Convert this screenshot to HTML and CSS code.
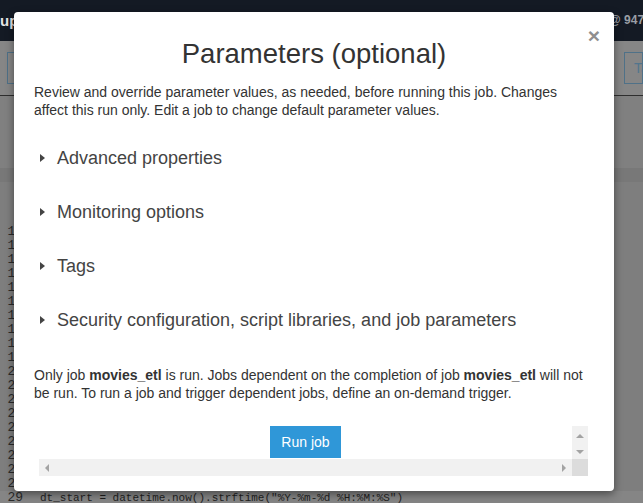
FILE: index.html
```html
<!DOCTYPE html>
<html lang="en">
<head>
<meta charset="utf-8">
<title>Parameters (optional)</title>
<link rel="stylesheet" href="styles.css">
</head>
<body>
<div class="page">
  <header class="topbar">
    <span class="crumb">up</span>
    <span class="account">@ 9471</span>
  </header>
  <div class="toolbar">
    <span class="tbtn tbtn-left">Save</span>
    <span class="tbtn tbtn-right">Ta</span>
  </div>
  <div class="pane"></div>
  <div class="band"></div>
  <div class="editor">
    <div class="row"><span class="ln">10</span><span class="code"></span></div>
    <div class="row"><span class="ln">11</span><span class="code"></span></div>
    <div class="row"><span class="ln">12</span><span class="code"></span></div>
    <div class="row"><span class="ln">13</span><span class="code"></span></div>
    <div class="row"><span class="ln">14</span><span class="code"></span></div>
    <div class="row"><span class="ln">15</span><span class="code"></span></div>
    <div class="row"><span class="ln">16</span><span class="code"></span></div>
    <div class="row"><span class="ln">17</span><span class="code"></span></div>
    <div class="row"><span class="ln">18</span><span class="code"></span></div>
    <div class="row"><span class="ln">19</span><span class="code"></span></div>
    <div class="row"><span class="ln">20</span><span class="code"></span></div>
    <div class="row"><span class="ln">21</span><span class="code"></span></div>
    <div class="row"><span class="ln">22</span><span class="code"></span></div>
    <div class="row"><span class="ln">23</span><span class="code"></span></div>
    <div class="row"><span class="ln">24</span><span class="code"></span></div>
    <div class="row"><span class="ln">25</span><span class="code"></span></div>
    <div class="row"><span class="ln">26</span><span class="code"></span></div>
    <div class="row"><span class="ln">27</span><span class="code"></span></div>
    <div class="row"><span class="ln">28</span><span class="code"></span></div>
    <div class="row row-active"><span class="ln">29</span><span class="code">dt_start = datetime.now().strftime("%Y-%m-%d %H:%M:%S")</span></div>
  </div>
</div>

<div class="modal">
  <span class="close">&times;</span>
  <h1 class="title">Parameters (optional)</h1>
  <p class="intro">Review and override parameter values, as needed, before running this job. Changes affect this run only. Edit a job to change default parameter values.</p>
  <div class="sections">
    <div class="section"><span class="caret"></span><span class="label">Advanced properties</span></div>
    <div class="section"><span class="caret"></span><span class="label">Monitoring options</span></div>
    <div class="section"><span class="caret"></span><span class="label">Tags</span></div>
    <div class="section"><span class="caret"></span><span class="label">Security configuration, script libraries, and job parameters</span></div>
  </div>
  <p class="note">Only job <b>movies_etl</b> is run. Jobs dependent on the completion of job <b>movies_etl</b> will not be run. To run a job and trigger dependent jobs, define an on-demand trigger.</p>
  <div class="scroller">
    <div class="scroll-content"><button class="run">Run job</button></div>
    <div class="vtrack"><span class="arr arr-up"></span><span class="arr arr-down"></span></div>
    <div class="htrack"><span class="arr arr-left"></span><span class="arr arr-right"></span></div>
    <div class="corner"></div>
  </div>
</div>
</body>
</html>
```
FILE: styles.css
```css
html, body {
  margin: 0;
  padding: 0;
  overflow: hidden;
  height: 100%;
}
body {
  font-family: "Liberation Sans", Arial, sans-serif;
  background: #7f7f7f;
}
.page {
  display: flex;
  flex-direction: column;
  height: 503px;
}
.topbar {
  height: 41px;
  flex: none;
  background: #141a24;
  display: flex;
  justify-content: space-between;
  align-items: center;
}
.crumb {
  color: #e6e6e6;
  font-weight: bold;
  font-size: 15px;
  margin-top: -1px;
}
.account {
  color: #9a9ea4;
  font-size: 12px;
  font-weight: bold;
  width: 34px;
  white-space: nowrap;
  overflow: hidden;
  margin-top: -2px;
}
.toolbar {
  height: 55px;
  flex: none;
  box-sizing: border-box;
  background: #868686;
  border-bottom: 1px solid #2e2e2e;
  display: flex;
  justify-content: space-between;
  align-items: flex-start;
  padding: 11px 0 0 7px;
}
.tbtn {
  height: 32px;
  box-sizing: border-box;
  border: 1px solid #4f7188;
  color: #52758d;
  font-size: 14px;
  line-height: 30px;
  padding: 0 10px;
  white-space: nowrap;
  overflow: hidden;
}
.tbtn-left { width: 60px; }
.tbtn-right { width: 19px; padding: 0 0 0 9px; }
.pane {
  height: 72px;
  flex: none;
  background: #808080;
}
.band {
  height: 14px;
  flex: none;
  background: #787878;
}
.editor {
  flex: 1;
  background: #7e7e7e;
  padding-top: 43px;
}
.row {
  display: flex;
  height: 14px;
  line-height: 14px;
}
.row-active { background: #858585; }
.ln {
  width: 23px;
  flex: none;
  text-align: right;
  font-family: "Liberation Mono", monospace;
  font-size: 13px;
  color: #2b2b2b;
}
.code {
  margin-left: 17px;
  font-family: "Liberation Mono", monospace;
  font-size: 11px;
  color: #1f1f1f;
  white-space: pre;
}

/* modal */
.modal {
  position: absolute;
  left: 14px;
  top: 12px;
  width: 600px;
  height: 479px;
  box-sizing: border-box;
  background: #fff;
  border-radius: 4px;
  box-shadow: 0 3px 8px rgba(0, 0, 0, 0.45);
  padding: 26px 20px 15px 20px;
  color: #333;
}
.close {
  position: absolute;
  right: 14px;
  top: 10px;
  font-size: 21px;
  font-weight: bold;
  color: #8f8f8f;
  line-height: 28px;
}
.title {
  margin: 0;
  font-weight: normal;
  font-size: 27.5px;
  line-height: 31px;
  text-align: center;
  color: #333;
}
.intro {
  margin: 14px 0 0 0;
  font-size: 14px;
  line-height: 18px;
}
.sections {
  margin-top: 28px;
  display: flex;
  flex-direction: column;
  gap: 32px;
}
.section {
  display: flex;
  align-items: center;
  height: 22px;
}
.caret {
  width: 0;
  height: 0;
  border-left: 5px solid #444;
  border-top: 4px solid transparent;
  border-bottom: 4px solid transparent;
  margin-left: 6px;
  margin-right: 12px;
}
.label {
  font-size: 18px;
  line-height: 22px;
  color: #444;
}
.note {
  margin: 35px 0 0 0;
  font-size: 14px;
  line-height: 18px;
}
.scroller {
  margin: 24px 0 0 5px;
  width: 549px;
  display: grid;
  grid-template-columns: 533px 16px;
  grid-template-rows: 33px 17px;
}
.scroll-content {
  display: flex;
  justify-content: center;
  align-items: flex-start;
}
.run {
  width: 71px;
  height: 32px;
  border: none;
  border-radius: 0;
  background: #2f97d8;
  color: #fff;
  font-family: "Liberation Sans", Arial, sans-serif;
  font-size: 14px;
  padding: 0;
}
.vtrack {
  background: #f1f1f1;
  display: flex;
  flex-direction: column;
  align-items: center;
  padding-top: 8px;
  gap: 12px;
}
.htrack {
  background: #f1f1f1;
  display: flex;
  justify-content: space-between;
  align-items: center;
  padding: 0 6px;
}
.corner { background: #dcdcdc; }
.arr {
  width: 0;
  height: 0;
  display: block;
}
.arr-up {
  border-bottom: 4px solid #a3a3a3;
  border-left: 4px solid transparent;
  border-right: 4px solid transparent;
}
.arr-down {
  border-top: 4px solid #a3a3a3;
  border-left: 4px solid transparent;
  border-right: 4px solid transparent;
}
.arr-left {
  border-right: 4px solid #a3a3a3;
  border-top: 4px solid transparent;
  border-bottom: 4px solid transparent;
}
.arr-right {
  border-left: 4px solid #a3a3a3;
  border-top: 4px solid transparent;
  border-bottom: 4px solid transparent;
}
```
